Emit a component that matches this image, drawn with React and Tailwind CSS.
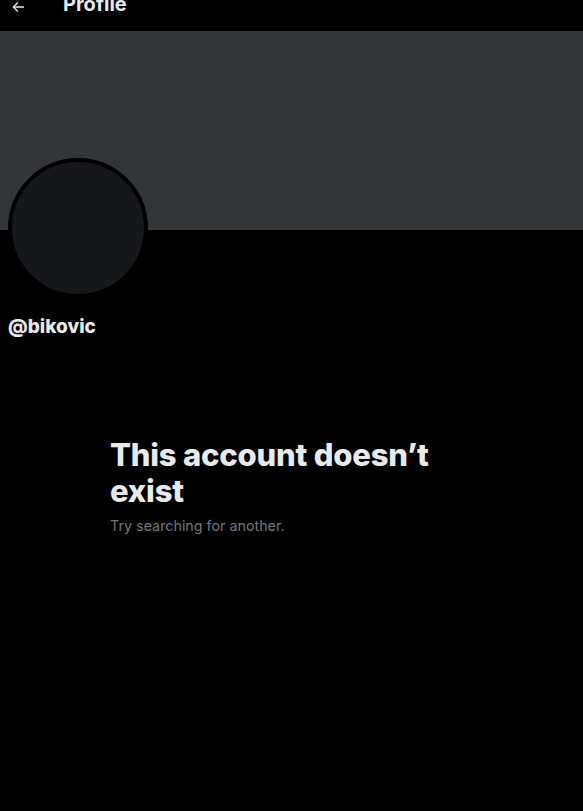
export default function App() {
  return (
    <div
      className="min-h-[811px] w-full bg-black text-[#e7e9ea]"
      style={{ fontFamily: "Inter, 'Liberation Sans', sans-serif" }}
    >
      <div className="h-[31px] overflow-hidden">
        <div className="flex h-[31px] items-start -mt-[8px]">
          <div className="ml-[10px] mt-[5px] flex h-[20px] w-[16px] items-center">
            <svg viewBox="0 0 24 24" width="16" height="16" fill="#e7e9ea">
              <path d="M7.414 13l5.043 5.04-1.414 1.42L3.586 12l7.457-7.46 1.414 1.42L7.414 11H21v2H7.414z" />
            </svg>
          </div>
          <span className="ml-[37px] text-[20px] font-bold leading-[24px]">Profile</span>
        </div>
      </div>

      <div className="h-[199px] bg-[#333639]" />

      <div className="px-[8px]">
        <div className="-mt-[72px] h-[140px] w-[140px] rounded-full border-[4px] border-black bg-[#16181c]" />
        <div className="mt-[17px] text-[19px] font-extrabold leading-[24px]">@bikovic</div>
      </div>

      <div className="ml-[110px] mt-[98px] max-w-[345px]">
        <h1 className="text-[31px] font-extrabold leading-[36px] tracking-[-0.2px]">
          This account doesn’t exist
        </h1>
        <p className="mt-[7px] text-[14.3px] leading-[20px] text-[#71767b]">
          Try searching for another.
        </p>
      </div>
    </div>
  );
}
